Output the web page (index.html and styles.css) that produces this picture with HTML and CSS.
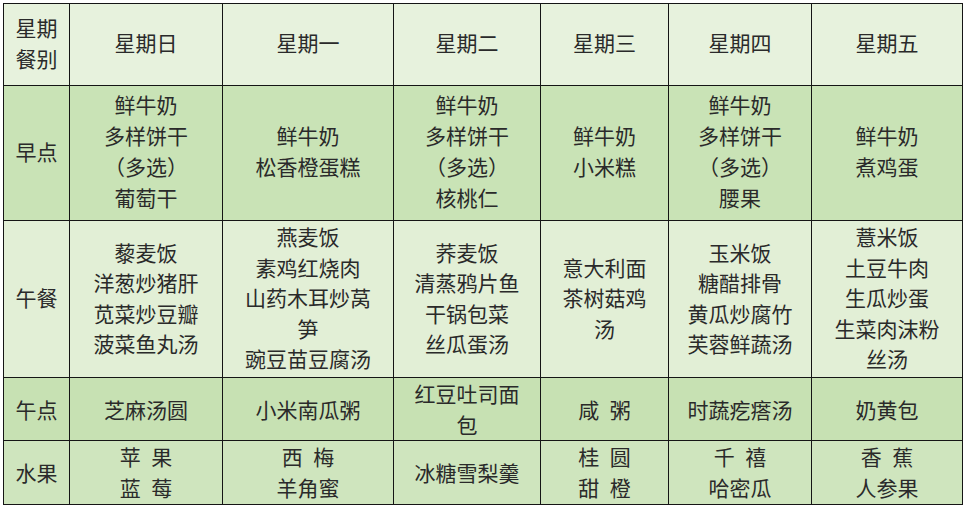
FILE: index.html
```html
<!DOCTYPE html>
<html lang="zh-CN">
<head>
<meta charset="utf-8">
<title>食谱</title>
<link rel="stylesheet" href="styles.css">
</head>
<body>
<table class="menu">
  <colgroup>
    <col class="c0"><col class="c1"><col class="c2"><col class="c3"><col class="c4"><col class="c5"><col class="c6">
  </colgroup>
  <tr class="r-head">
    <td>星期<br>餐别</td>
    <td>星期日</td>
    <td>星期一</td>
    <td>星期二</td>
    <td>星期三</td>
    <td>星期四</td>
    <td>星期五</td>
  </tr>
  <tr class="r-breakfast">
    <td>早点</td>
    <td>鲜牛奶<br>多样饼干<br>（多选）<br>葡萄干</td>
    <td>鲜牛奶<br>松香橙蛋糕</td>
    <td>鲜牛奶<br>多样饼干<br>（多选）<br>核桃仁</td>
    <td>鲜牛奶<br>小米糕</td>
    <td>鲜牛奶<br>多样饼干<br>（多选）<br>腰果</td>
    <td>鲜牛奶<br>煮鸡蛋</td>
  </tr>
  <tr class="r-lunch">
    <td>午餐</td>
    <td>藜麦饭<br>洋葱炒猪肝<br>苋菜炒豆瓣<br>菠菜鱼丸汤</td>
    <td>燕麦饭<br>素鸡红烧肉<br>山药木耳炒莴<br>笋<br>豌豆苗豆腐汤</td>
    <td>荞麦饭<br>清蒸鸦片鱼<br>干锅包菜<br>丝瓜蛋汤</td>
    <td>意大利面<br>茶树菇鸡<br>汤</td>
    <td>玉米饭<br>糖醋排骨<br>黄瓜炒腐竹<br>芙蓉鲜蔬汤</td>
    <td>薏米饭<br>土豆牛肉<br>生瓜炒蛋<br>生菜肉沫粉<br>丝汤</td>
  </tr>
  <tr class="r-snack">
    <td>午点</td>
    <td>芝麻汤圆</td>
    <td>小米南瓜粥</td>
    <td>红豆吐司面<br>包</td>
    <td>咸&ensp;粥</td>
    <td>时蔬疙瘩汤</td>
    <td>奶黄包</td>
  </tr>
  <tr class="r-fruit">
    <td>水果</td>
    <td>苹&ensp;果<br>蓝&ensp;莓</td>
    <td>西&ensp;梅<br>羊角蜜</td>
    <td>冰糖雪梨羹</td>
    <td>桂&ensp;圆<br>甜&ensp;橙</td>
    <td>千&ensp;禧<br>哈密瓜</td>
    <td>香&ensp;蕉<br>人参果</td>
  </tr>
</table>
</body>
</html>
```

FILE: styles.css
```css
html, body {
  margin: 0;
  padding: 0;
  background: #ffffff;
}

body {
  padding: 3px 0 0 3px;
}

.menu {
  border-collapse: collapse;
  table-layout: fixed;
  width: 960px;
  font-family: "Noto Sans CJK SC", "Noto Sans", sans-serif;
  font-size: 21px;
  line-height: 31px;
  color: #2a2a2a;
}

.menu td {
  border: 1px solid #151515;
  padding: 0;
  text-align: center;
  vertical-align: middle;
  white-space: nowrap;
}

.c0 { width: 66px; }
.c1 { width: 153px; }
.c2 { width: 171px; }
.c3 { width: 147px; }
.c4 { width: 128px; }
.c5 { width: 143px; }
.c6 { width: 151px; }

.r-head td { height: 77px; padding-bottom: 4px; background: #e7f2dd; }
.r-breakfast td { height: 130px; padding-bottom: 4px; background: #c9e3b6; }
.r-lunch td { height: 153px; padding-bottom: 3px; background: #e2efd6; line-height: 30.5px; }
.r-snack td { height: 62px; background: #c7e1b3; }
.r-fruit td { height: 62px; padding-bottom: 1px; background: #cfe5be; }
```
